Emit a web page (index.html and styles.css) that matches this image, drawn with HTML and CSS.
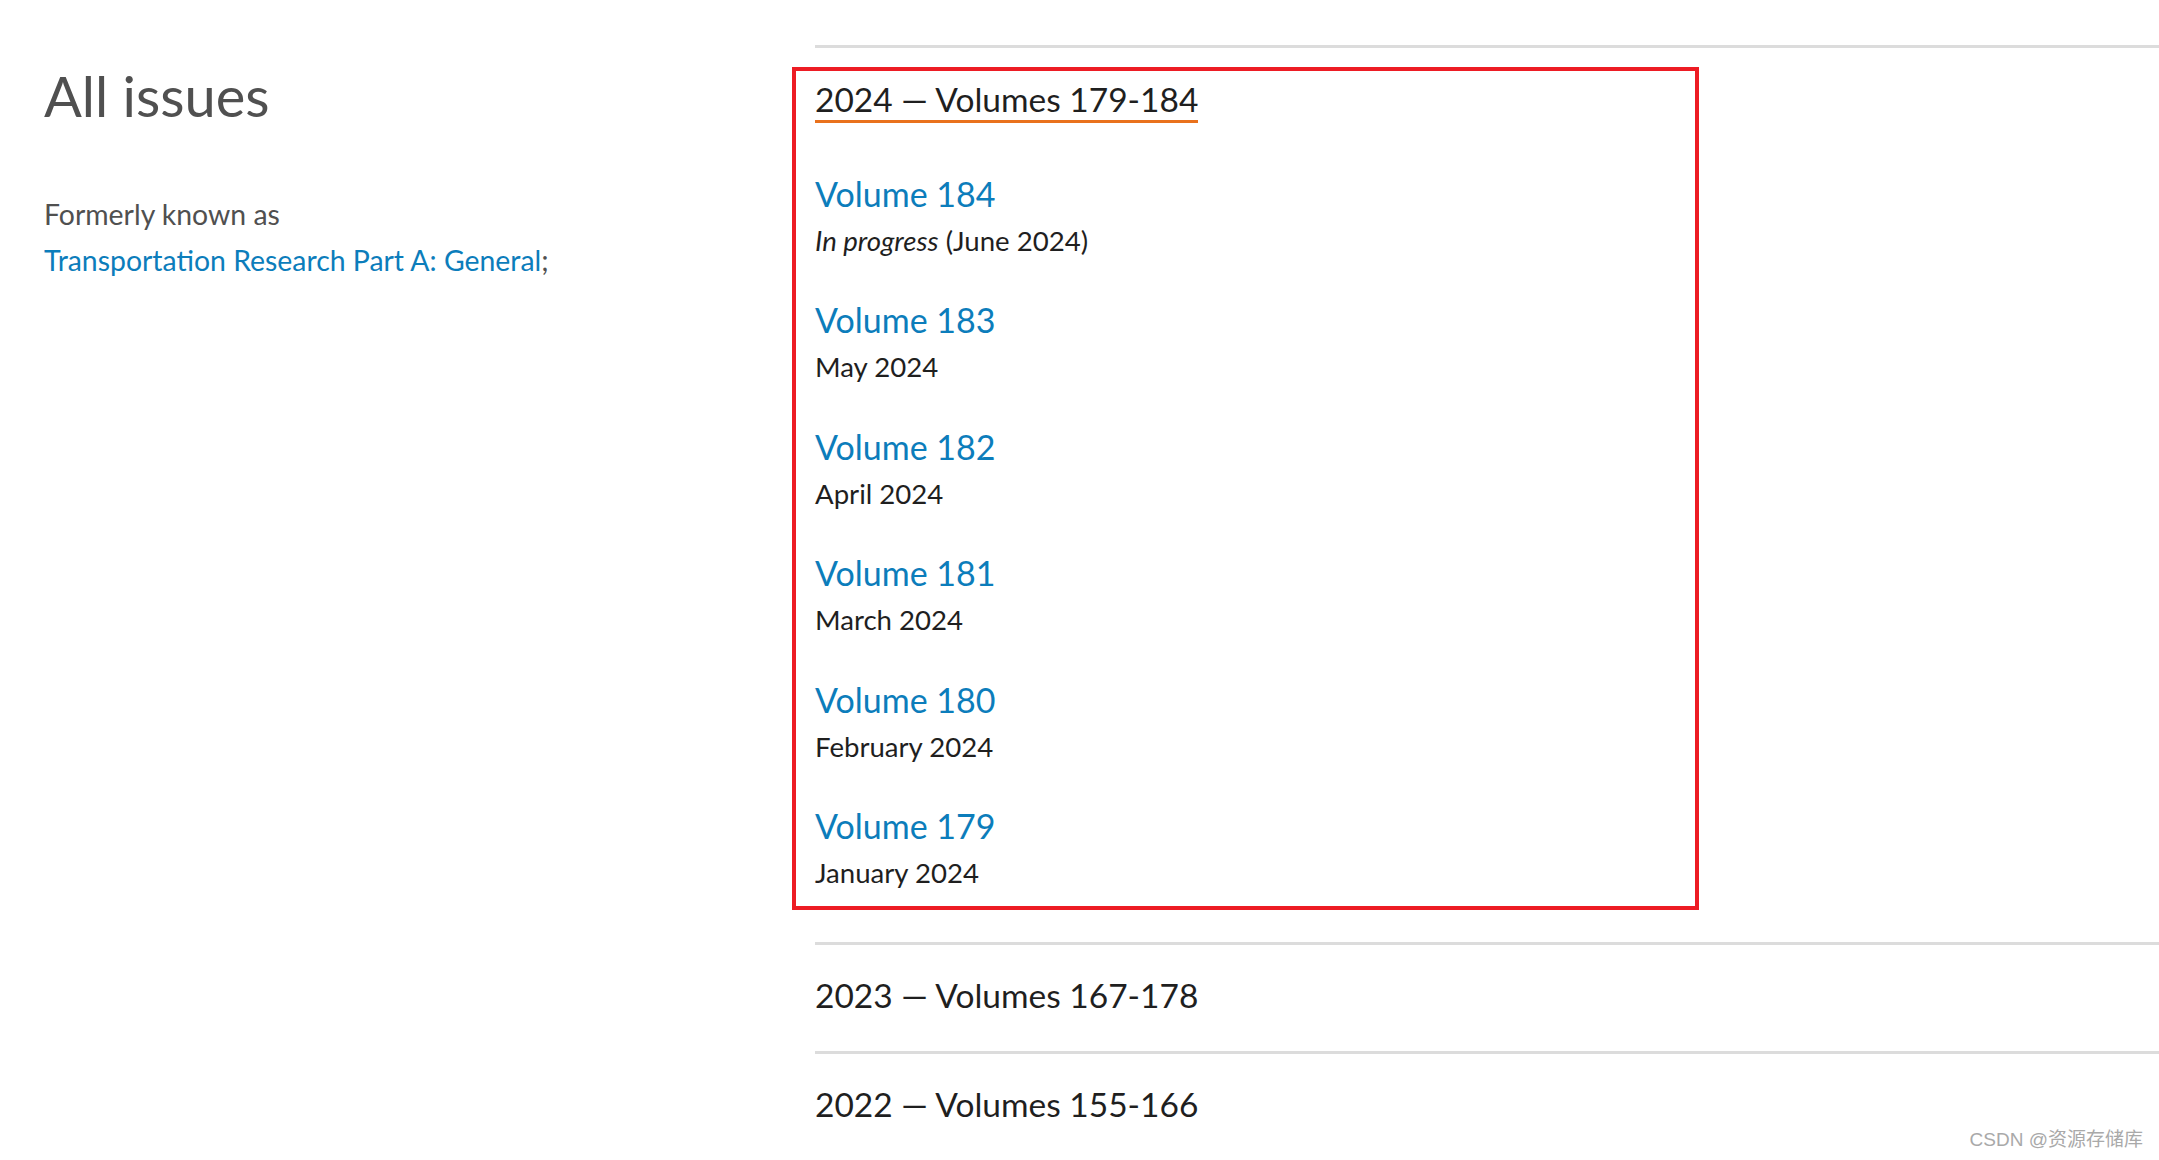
FILE: index.html
```html
<!DOCTYPE html>
<html lang="en">
<head>
<meta charset="utf-8">
<title>All issues</title>
<link rel="stylesheet" href="styles.css">
</head>
<body>
<main class="page">
  <aside class="intro">
    <h1 class="intro-title">All issues</h1>
    <p class="intro-text">Formerly known as<br><a class="link" href="#">Transportation Research Part A: General</a>;</p>
  </aside>
  <section class="issues">
    <div class="year year-open">
      <div class="highlight">
        <h2 class="year-title year-title-open">2024 — Volumes 179-184</h2>
        <ul class="volumes">
          <li class="volume"><a class="volume-link" href="#">Volume 184</a><span class="volume-date"><em>In progress</em> (June 2024)</span></li>
          <li class="volume"><a class="volume-link" href="#">Volume 183</a><span class="volume-date">May 2024</span></li>
          <li class="volume"><a class="volume-link" href="#">Volume 182</a><span class="volume-date">April 2024</span></li>
          <li class="volume"><a class="volume-link" href="#">Volume 181</a><span class="volume-date">March 2024</span></li>
          <li class="volume"><a class="volume-link" href="#">Volume 180</a><span class="volume-date">February 2024</span></li>
          <li class="volume"><a class="volume-link" href="#">Volume 179</a><span class="volume-date">January 2024</span></li>
        </ul>
      </div>
    </div>
    <div class="year">
      <h2 class="year-title">2023 — Volumes 167-178</h2>
    </div>
    <div class="year year-last">
      <h2 class="year-title">2022 — Volumes 155-166</h2>
    </div>
  </section>
</main>
<div class="watermark">CSDN @资源存储库</div>
</body>
</html>
```

FILE: styles.css
```css
html, body {
  margin: 0;
  padding: 0;
  background: #ffffff;
  overflow: hidden;
}

body {
  font-family: Lato, "Open Sans", sans-serif;
  color: #1f1f1f;
  height: 1160px;
  position: relative;
}

.page {
  display: flex;
  align-items: flex-start;
}

.intro {
  width: 815px;
  box-sizing: border-box;
  padding-left: 44px;
  padding-top: 63px;
  flex: none;
}

.intro-title {
  margin: 0;
  font-size: 56px;
  line-height: 66px;
  font-weight: 400;
  color: #505050;
}

.intro-text {
  margin: 62px 0 0;
  font-size: 28.4px;
  line-height: 46px;
  color: #505050;
}

.link {
  color: #0c7dbb;
  text-decoration: none;
}

.issues {
  flex: 1;
  padding-top: 45px;
}

.year {
  border-top: 3px solid #dcdcdc;
  padding: 29px 0 35px;
}

.year-last {
  border-bottom: 3px solid #dcdcdc;
}

.year-open {
  padding: 19px 0 32px;
}

.highlight {
  margin-left: -23px;
  width: 907px;
  box-sizing: border-box;
  border: 4px solid #ed1c24;
  padding: 7px 0 9px 19px;
}

.year-title {
  margin: 0;
  font-size: 33.5px;
  line-height: 42px;
  font-weight: 400;
  color: #1f1f1f;
}

.year-title-open {
  display: inline-block;
  border-bottom: 3px solid #e9711c;
}

.volumes {
  list-style: none;
  margin: 48px 0 0;
  padding: 0;
  display: flex;
  flex-direction: column;
  gap: 32.4px;
}

.volume {
  display: flex;
  flex-direction: column;
}

.volume-link {
  font-size: 34px;
  line-height: 46px;
  color: #0c7dbb;
  text-decoration: none;
}

.volume-date {
  font-size: 27.6px;
  line-height: 48px;
  color: #1f1f1f;
}

.watermark {
  position: absolute;
  right: 16px;
  bottom: 10px;
  font-family: "Liberation Sans", "Noto Sans CJK SC", sans-serif;
  font-size: 19px;
  line-height: 20px;
  color: #a9a9a9;
}
```
